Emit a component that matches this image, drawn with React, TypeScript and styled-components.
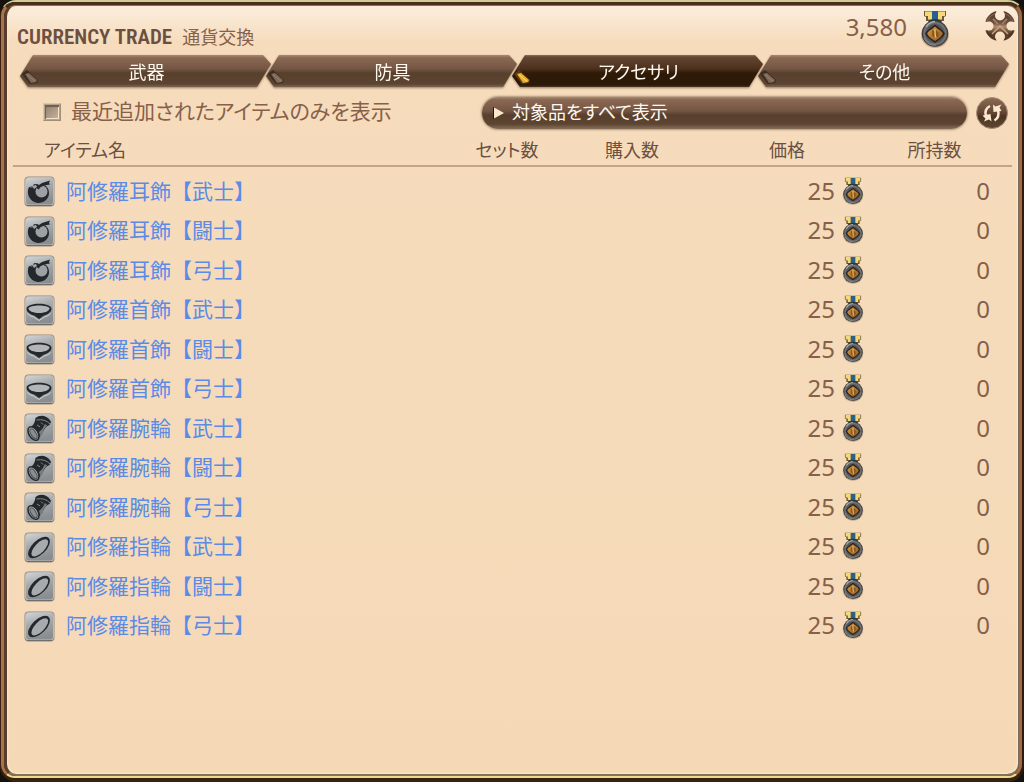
import React, { useState } from "react";
import styled, { createGlobalStyle, css } from "styled-components";

const Global = createGlobalStyle`
  *, *::before, *::after { box-sizing: border-box; }
  body {
    margin: 0;
    background: #17110d;
    color: #87604a;
    font-family: "Noto Sans CJK JP", "Noto Sans", sans-serif;
    font-size: 18px;
  }
  button, select, input { font: inherit; margin: 0; }
`;

const OuterRim = styled.div`
  min-height: 100vh;
  display: flex;
  border-style: solid;
  border-width: 2px 2px 4px 1px;
  border-color: #cfcc94 #2e1a0e #3a2211 #3a2112;
  border-radius: 16px;
  background: #4a2d1b;
`;

const MiddleRim = styled.div`
  flex: 1;
  display: flex;
  border-style: solid;
  border-width: 3px 3px 2px 3px;
  border-color: #4a2d1b #a06a45 #ecdc8c #a9744c;
  border-radius: 14px;
  background: #5a3d2b;
`;

const Panel = styled.main`
  flex: 1;
  min-width: 0;
  border-style: solid;
  border-width: 1px 1px 2px 3px;
  border-color: #8d7059 #7d6a58 #85715a #5a3d2b;
  border-radius: 12px;
  background: linear-gradient(#fbeedd 0, #f6dcbc 36px, #f5d9b7 100%);
  box-shadow: inset 0 0 2px 1px #fbe9d2;
`;

const Header = styled.header`
  display: flex;
  align-items: center;
  height: 49px;
  padding: 4px 2px 7px 10px;
`;

const Title = styled.h1`
  flex: 1;
  display: flex;
  align-items: baseline;
  gap: 10px;
  margin: 0;
  padding-top: 14px;
  font-weight: 400;
  line-height: 30px;
`;

const TitleLatin = styled.span`
  color: #6b5041;
  font-family: "Noto Sans ExtraCondensed", "Roboto Condensed", "Liberation Sans Narrow", sans-serif;
  font-size: 21px;
  font-weight: 600;
`;

const TitleLocal = styled.span`
  font-size: 18px;
`;

const Balance = styled.div`
  display: flex;
  align-items: center;
  gap: 14px;
  margin-right: 35px;
  font-family: "Noto Sans", sans-serif;
  font-size: 24px;
  line-height: 30px;
`;

const Amount = styled.span`
  padding-bottom: 4px;
`;

const IconButton = styled.button<{ $raised?: boolean }>`
  flex: none;
  align-self: ${(p) => (p.$raised ? "flex-start" : "center")};
  width: 32px;
  height: 32px;
  padding: 0;
  border: 0;
  background: none;
  cursor: pointer;
  svg { display: block; }
`;

const Tabs = styled.nav`
  display: flex;
  padding: 0 9px 0 13px;
  filter: drop-shadow(0 1px 1px rgba(90, 60, 35, 0.6));
`;

const Tab = styled.button<{ $active: boolean }>`
  position: relative;
  flex: 1;
  height: 32px;
  padding: 0 0 0 2px;
  border: 0;
  color: #fff8ee;
  font-size: 18px;
  line-height: 30px;
  font-feature-settings: "palt";
  cursor: pointer;
  clip-path: polygon(0 66%, 13px 0, calc(100% - 8px) 0, 100% 28%, calc(100% - 14px) 100%, 8px 100%);
  background: ${(p) =>
    p.$active
      ? "linear-gradient(#8a7260 0, #644632 2px, #4c301d 14px, #2f1a08 18px, #2d1907 30px, #4b3524 32px)"
      : "linear-gradient(#a18b78 0, #8a6752 3px, #745644 14px, #58402e 18px, #5d4430 29px, #7c6653 32px)"};
  & + & { margin-left: -5px; }
`;

const Gem = styled.svg`
  position: absolute;
  left: 1px;
  top: 15px;
`;

const Filters = styled.div`
  display: flex;
  align-items: center;
  padding: 10px 10px 0 36px;
`;

const RecentLabel = styled.label`
  flex: 1;
  display: flex;
  align-items: center;
  gap: 10px;
  padding-bottom: 2px;
  font-size: 21px;
  line-height: 26px;
  font-feature-settings: "palt";
  white-space: nowrap;
`;

const LabelText = styled.span`
  padding-bottom: 4px;
`;

const CheckBox = styled.input`
  appearance: none;
  width: 18px;
  height: 18px;
  border: 1px solid;
  border-color: #d9c6aa #a18e75 #a18e75 #d9c6aa;
  background: linear-gradient(135deg, #8d7c6d, #cdb89c);
  box-shadow: inset 0 0 0 1px #b5a38b, inset 1px 2px 1px 1px #6f5f52, inset -1px -1px 0 1px #f2e4cd;
  &:checked { background: #6a4a30; }
`;

const SelectWrap = styled.div`
  position: relative;
  flex: 0 1 485px;
  margin-right: 9px;
`;

const Select = styled.select`
  appearance: none;
  display: block;
  width: 100%;
  height: 32px;
  padding: 0 30px 4px;
  border: 0;
  border-radius: 16px;
  color: #fff8ee;
  font-size: 18px;
  line-height: 28px;
  font-feature-settings: "palt";
  background: linear-gradient(#a18b78 0, #8a6752 3px, #745644 14px, #58402e 18px, #5d4430 27px, #86705c 32px);
  box-shadow: 0 0 2px 1px rgba(120, 90, 65, 0.55);
  cursor: pointer;
`;

const SelectArrow = styled.svg`
  position: absolute;
  left: 10px;
  top: 9px;
  pointer-events: none;
`;

const Table = styled.table`
  width: calc(100% - 12px);
  margin: 0 6px;
  border-collapse: separate;
  border-spacing: 0;
  table-layout: fixed;
  tbody::before {
    content: "";
    display: block;
    height: 5px;
  }
`;

const Col = styled.col<{ $w?: number }>`
  ${(p) => p.$w && css`width: ${p.$w}px;`}
`;

type CellKind = "name" | "count" | "price" | "owned";

const cellPadding: Record<CellKind, string> = {
  name: "0 0 0 11px",
  count: "0",
  price: "0 17px 0 0",
  owned: "0 22px 2px 0",
};

const HeadCell = styled.th<{ $kind: CellKind }>`
  height: 38px;
  padding: ${(p) =>
    p.$kind === "name" ? "4px 0 0 31px" : p.$kind === "owned" ? "4px 24px 0 0" : "4px 0 0"};
  border-bottom: 2px solid #c4a485;
  color: #6b5041;
  font-size: 18px;
  font-weight: 400;
  line-height: 26px;
  font-feature-settings: "palt";
  text-align: ${(p) => (p.$kind === "name" ? "left" : "center")};
`;

const Row = styled.tr`
  height: 39px;
  &:nth-child(even) { height: 40px; }
`;

const Cell = styled.td<{ $kind: CellKind }>`
  padding: ${(p) => cellPadding[p.$kind]};
  font-family: "Noto Sans", sans-serif;
  font-size: 24px;
  line-height: 30px;
  text-align: right;
`;

const ItemLink = styled.a`
  display: flex;
  align-items: center;
  gap: 11px;
  color: #5b8be6;
  font-family: "Noto Sans CJK JP", sans-serif;
  font-size: 21px;
  line-height: 26px;
  text-decoration: none;
  white-space: nowrap;
`;

const ItemName = styled.span`
  padding-bottom: 4px;
`;

const Price = styled.span`
  display: flex;
  align-items: center;
  justify-content: flex-end;
  gap: 7px;
  padding-bottom: 2px;
`;

const Medal = ({ width, height }: { width: number; height: number }) => (
  <svg width={width} height={height} viewBox="0 0 28 38" aria-hidden="true">
    <defs>
      <radialGradient id="medalFace" cx="50%" cy="50%" r="50%">
        <stop offset="0" stopColor="#3c3c3d" />
        <stop offset="0.65" stopColor="#505254" />
        <stop offset="0.82" stopColor="#76797c" />
        <stop offset="1" stopColor="#2b2b2c" />
      </radialGradient>
      <linearGradient id="medalGold" x1="0" y1="0" x2="1" y2="1">
        <stop offset="0" stopColor="#d69a44" />
        <stop offset="1" stopColor="#8f5c20" />
      </linearGradient>
    </defs>
    <ellipse cx="14" cy="25" rx="14" ry="13" fill="#6b4c33" opacity="0.3" />
    <path d="M3 1h22v5l-2 1v4H5V7L3 6z" fill="#6c5a35" />
    <path d="M4 1.500h7v8H7V6H4zM17 1.500h7V6h-3v3.500h-4z" fill="#f5d978" />
    <path d="M11 1.500h6v8h-6z" fill="#28608f" />
    <path d="M7 11q7-4 14 0l-2 3H9z" fill="#343638" />
    <circle cx="14" cy="23.500" r="13.200" fill="url(#medalFace)" />
    <path d="M5 17Q8 12 14 11.500" fill="none" stroke="#a8abad" strokeWidth="1.500" />
    <path d="M3 28q4 8 12 7" fill="none" stroke="#8a8c8e" strokeWidth="1" />
    <path d="M14 14.500l3 2.500 5 4 2 2.500-2 3-5 4-3 2.500-3-2.500-5-4-2-3 2-2.500 5-4z" fill="#2c2119" />
    <path d="M14 16.500l3 2.500 3 2 2 2.500-2 3-3 2.500L14 31 11 29l-3-2.500-2-3L8 21l3-2z" fill="url(#medalGold)" />
    <path d="M11 20l2 1v6l-2-1zM15 20l3 3-1 4-2 1z" fill="#8a561f" />
    <path d="M14 19v4l1 5" stroke="#f4c878" fill="none" />
  </svg>
);

const CloseIcon = () => (
  <svg width="32" height="32" viewBox="0 0 32 32" aria-hidden="true">
    <defs>
      <linearGradient id="closeFill" x1="0" y1="0" x2="0" y2="1">
        <stop offset="0" stopColor="#4a3427" />
        <stop offset="0.4" stopColor="#6e5140" />
        <stop offset="0.52" stopColor="#b08b6e" />
        <stop offset="0.64" stopColor="#7d5b44" />
        <stop offset="0.76" stopColor="#533826" />
        <stop offset="1" stopColor="#6d4c36" />
      </linearGradient>
      <mask id="closeNotches">
        <rect width="32" height="32" fill="#fff" />
        <circle cx="16" cy="5.500" r="5" />
        <circle cx="16" cy="26.500" r="5" />
        <circle cx="5" cy="16" r="4.500" />
        <circle cx="27" cy="16" r="4.500" />
        <path d="M12 0h8l-1 5h-6zM13 27h6l1 5h-8zM0 11l5 2v6l-5 2zM32 11l-5 2v6l5 2z" />
      </mask>
    </defs>
    <g mask="url(#closeNotches)">
      <circle cx="16" cy="16" r="15.300" fill="url(#closeFill)" />
      <path d="M3 11Q6 5 12 3M20 3Q26 5 29 11" fill="none" stroke="#8f6c54" strokeWidth="1" />
      <path d="M8 24L16 16L24 24" fill="none" stroke="#c9a384" strokeWidth="1.500" />
      <path d="M9 9l5 5M23 9l-5 5" fill="none" stroke="#a98468" strokeWidth="1.500" />
      <path d="M3 21Q6 28 12 29.500M20 29.500Q26 28 29 21" fill="none" stroke="#452d1e" />
    </g>
  </svg>
);

const RefreshIcon = () => (
  <svg width="32" height="32" viewBox="0 0 32 32" aria-hidden="true">
    <defs>
      <linearGradient id="refreshFill" x1="0" y1="0" x2="0" y2="1">
        <stop offset="0" stopColor="#8d6c56" />
        <stop offset="0.5" stopColor="#624633" />
        <stop offset="0.6" stopColor="#4c3422" />
        <stop offset="1" stopColor="#614834" />
      </linearGradient>
    </defs>
    <circle cx="16" cy="16" r="15.500" fill="url(#refreshFill)" stroke="#a78e78" />
    <path d="M14 9Q8 12 10 19" fill="none" stroke="#fbe9ce" strokeWidth="2.500" />
    <path d="M6.500 18.500l8-1.500 1 7.500-2.500-2-5 2 1.500-3z" fill="#fbe9ce" />
    <path d="M18.500 23.500Q24 20 22 13" fill="none" stroke="#fbe9ce" strokeWidth="2.500" />
    <path d="M25.500 14l-8 1-.5-7.500 2.500 2 6-2-2 3z" fill="#fbe9ce" />
  </svg>
);

type Kind = "ear" | "neck" | "wrist" | "ring";

const glyphs: Record<Kind, React.ReactNode> = {
  ear: (
    <>
      <path d="M5 11C2 17 5 26 14 27C20 27 25 23 25 17C25 13 23 10 20 9L14 9L10 12z" fill="#24282c" />
      <circle cx="17.500" cy="15.500" r="6" fill="#9ea1a3" />
      <path d="M10 8L9 10l-3 1q3 0 4 3l2-1V9z" fill="#24282c" />
      <path d="M10 8.500l3-.5 2 1 3-2 8-2.500-1 2.500 1 1.500-6 1-4 2-1 2-2-1z" fill="#24282c" />
      <path d="M8 10l2 3 3-2-1-2z" fill="#a2a5a7" />
    </>
  ),
  neck: (
    <>
      <path d="M2.500 13.500C3 7 27 7 27.500 13.500C27.500 16.500 25 19 20 20.500L15 24L10 20.500C5 19 2.500 16.500 2.500 13.500z" fill="#24282c" />
      <path d="M4.500 13.500C5 9.500 25 9.500 25.500 13.500C25 16.500 20 18 15 18S5 16.500 4.500 13.500z" fill="#b2b5b7" />
      <path d="M3.500 18.500q3 3 6 3.500l5.500 3.500 5.500-3.500q4-1 6-3.500" fill="none" stroke="#cfd2d3" />
    </>
  ),
  wrist: (
    <>
      <path d="M11.500 5Q15 2 20 3Q25 4.500 27 9L25.500 12Q22 13 20 17L16 24L5 15.500Q11 12 11.500 5z" fill="#24282c" />
      <path d="M12.500 7Q21 5.500 26 11" fill="none" stroke="#85888b" />
      <path d="M21 11l2 1.500q-4 4-4 8l-3 3.500-1-5q4-3 6-8z" fill="#787b7e" />
      <path d="M13 12l3 2M17 9.500l2 2" stroke="#85888b" fill="none" />
      <ellipse cx="9.500" cy="20.500" rx="4.500" ry="7.500" transform="rotate(-32 9.500 20.500)" fill="#b1b4b6" stroke="#24282c" strokeWidth="1.500" />
      <ellipse cx="9.500" cy="20.800" rx="2.500" ry="5.500" transform="rotate(-32 9.500 20.800)" fill="#8c8f91" stroke="#4b4f52" />
    </>
  ),
  ring: (
    <>
      <ellipse cx="15" cy="15.500" rx="13.500" ry="7" transform="rotate(-44 15 15.500)" fill="#24282c" />
      <ellipse cx="15.800" cy="15.800" rx="11" ry="4.800" transform="rotate(-46 15.800 15.800)" fill="#a8abad" />
    </>
  ),
};

const ItemIcon = ({ kind }: { kind: Kind }) => (
  <svg width="31" height="31" viewBox="0 0 31 31" aria-hidden="true">
    <defs>
      <linearGradient id="tile" x1="0" y1="0" x2="0.3" y2="1">
        <stop offset="0" stopColor="#d3d5d6" />
        <stop offset="0.45" stopColor="#a8abad" />
        <stop offset="1" stopColor="#8a8e90" />
      </linearGradient>
    </defs>
    <rect x="0.500" y="0.500" width="30" height="30" rx="4" fill="#94877a" />
    <rect x="1.500" y="1.500" width="28" height="27.500" rx="3" fill="url(#tile)" stroke="#b9bcbd" />
    <path d="M3 29.500h25" stroke="#6d6e6f" />
    {glyphs[kind]}
  </svg>
);

const parts: { kind: Kind; name: string }[] = [
  { kind: "ear", name: "耳飾" },
  { kind: "neck", name: "首飾" },
  { kind: "wrist", name: "腕輪" },
  { kind: "ring", name: "指輪" },
];

const items = parts.flatMap(({ kind, name }) =>
  ["武士", "闘士", "弓士"].map((job) => ({ kind, name: `阿修羅${name}【${job}】`, price: 25, owned: 0 }))
);

const tabNames = ["武器", "防具", "アクセサリ", "その他"];

export default function App() {
  const [active, setActive] = useState(2);
  return (
    <>
      <Global />
      <OuterRim>
        <MiddleRim>
          <Panel>
            <Header>
              <Title>
                <TitleLatin>CURRENCY TRADE</TitleLatin>
                <TitleLocal>通貨交換</TitleLocal>
              </Title>
              <Balance>
                <Amount>3,580</Amount>
                <Medal width={28} height={38} />
              </Balance>
              <IconButton type="button" aria-label="閉じる" $raised>
                <CloseIcon />
              </IconButton>
            </Header>
            <Tabs>
              {tabNames.map((name, i) => (
                <Tab key={name} type="button" $active={i === active} onClick={() => setActive(i)}>
                  <Gem width="18" height="15" viewBox="0 0 18 15" aria-hidden="true">
                    <path d="M1 4l5-4 11 10-1 3-7 1z" fill={i === active ? "#5e3a0e" : "#3b2d23"} />
                    <path d="M4 4l4-1 8 7-1 2-5 1z" fill={i === active ? "#e5ae2e" : "#7d6858"} />
                    <path d="M6 4.500l8 7" stroke={i === active ? "#ffe375" : "#97826f"} />
                  </Gem>
                  {name}
                </Tab>
              ))}
            </Tabs>
            <Filters>
              <RecentLabel>
                <CheckBox type="checkbox" />
                <LabelText>最近追加されたアイテムのみを表示</LabelText>
              </RecentLabel>
              <SelectWrap>
                <Select aria-label="対象品">
                  <option>対象品をすべて表示</option>
                </Select>
                <SelectArrow width="14" height="14" viewBox="0 0 14 14" aria-hidden="true">
                  <path d="M1 1v12l2-1V2z" fill="#21150d" />
                  <path d="M2 1.500l10 5.500-10 5.500z" fill="#fbe9ce" />
                </SelectArrow>
              </SelectWrap>
              <IconButton type="button" aria-label="更新">
                <RefreshIcon />
              </IconButton>
            </Filters>
            <Table>
              <colgroup>
                <Col />
                <Col $w={128} />
                <Col $w={122} />
                <Col $w={188} />
                <Col $w={131} />
              </colgroup>
              <thead>
                <tr>
                  <HeadCell $kind="name">アイテム名</HeadCell>
                  <HeadCell $kind="count">セット数</HeadCell>
                  <HeadCell $kind="count">購入数</HeadCell>
                  <HeadCell $kind="price">価格</HeadCell>
                  <HeadCell $kind="owned">所持数</HeadCell>
                </tr>
              </thead>
              <tbody>
                {items.map((item) => (
                  <Row key={item.name}>
                    <Cell $kind="name">
                      <ItemLink href="#">
                        <ItemIcon kind={item.kind} />
                        <ItemName>{item.name}</ItemName>
                      </ItemLink>
                    </Cell>
                    <Cell $kind="count" />
                    <Cell $kind="count" />
                    <Cell $kind="price">
                      <Price>
                        {item.price}
                        <Medal width={22} height={28} />
                      </Price>
                    </Cell>
                    <Cell $kind="owned">{item.owned}</Cell>
                  </Row>
                ))}
              </tbody>
            </Table>
          </Panel>
        </MiddleRim>
      </OuterRim>
    </>
  );
}
